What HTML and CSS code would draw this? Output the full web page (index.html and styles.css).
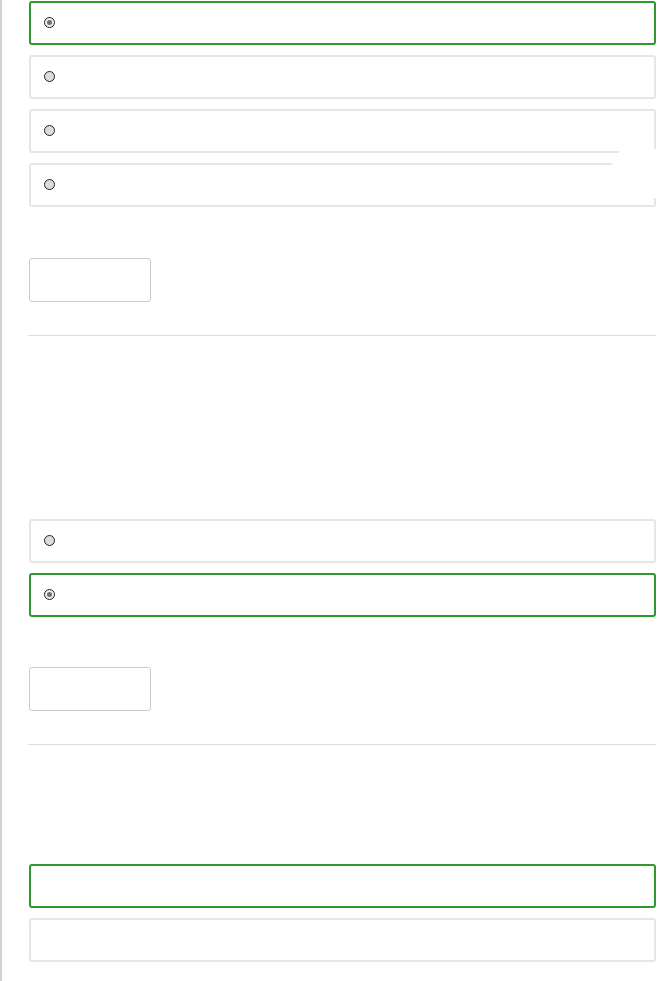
FILE: index.html
```html
<!DOCTYPE html>
<html>
<head>
<meta charset="utf-8">
<link rel="stylesheet" href="styles.css">
</head>
<body>
<div class="page">
  <div class="options">
    <label class="option selected"><span class="radio checked"></span></label>
    <label class="option"><span class="radio"></span></label>
    <label class="option"><span class="radio"></span></label>
    <label class="option"><span class="radio"></span></label>
  </div>
  <button class="btn" type="button"></button>
  <hr class="divider">

  <div class="options gap-large">
    <label class="option"><span class="radio"></span></label>
    <label class="option selected"><span class="radio checked"></span></label>
  </div>
  <button class="btn btn-second" type="button"></button>
  <hr class="divider">

  <div class="options gap-medium">
    <div class="option selected"></div>
    <div class="option"></div>
  </div>
</div>
<div class="mask"></div>
</body>
</html>
```
FILE: styles.css
```css
html, body {
  margin: 0;
  padding: 0;
  background: #ffffff;
  font-family: "Liberation Sans", Arial, sans-serif;
}

.page {
  border-left: 2px solid #d2d2d2;
  padding: 1px 11px 40px 27px;
  min-height: 981px;
  box-sizing: border-box;
}

.options {
  display: flex;
  flex-direction: column;
  gap: 10px;
}

.gap-large {
  margin-top: 183px;
}

.gap-medium {
  margin-top: 119px;
}

.option {
  display: flex;
  align-items: center;
  height: 44px;
  box-sizing: border-box;
  border: 2px solid #e6e6e6;
  border-radius: 3px;
  padding-left: 13px;
}

.option.selected {
  border-color: #2f982f;
}

.radio {
  width: 11px;
  height: 11px;
  margin-bottom: 2px;
  box-sizing: border-box;
  border: 1px solid #222222;
  border-radius: 50%;
  background: #dcdcdc;
  display: flex;
  align-items: center;
  justify-content: center;
}

.radio.checked {
  background: #eeeeee;
}

.radio.checked::after {
  content: "";
  width: 5px;
  height: 5px;
  border-radius: 50%;
  background: #6e6e6e;
}

.btn {
  display: block;
  width: 122px;
  height: 44px;
  margin: 51px 0 0 0;
  padding: 0;
  background: #ffffff;
  border: 1px solid #cccccc;
  border-radius: 3px;
}

.btn-second {
  margin-top: 50px;
}

.divider {
  margin: 33px 0 0 -1px;
  border: 0;
  height: 1px;
  background: #dddddd;
}

.mask {
  position: absolute;
  left: 600px;
  top: 149px;
  width: 67px;
  height: 49px;
  background: #ffffff;
  clip-path: polygon(21px 0, 67px 0, 67px 49px, 11px 49px, 11px 16px);
}
```
